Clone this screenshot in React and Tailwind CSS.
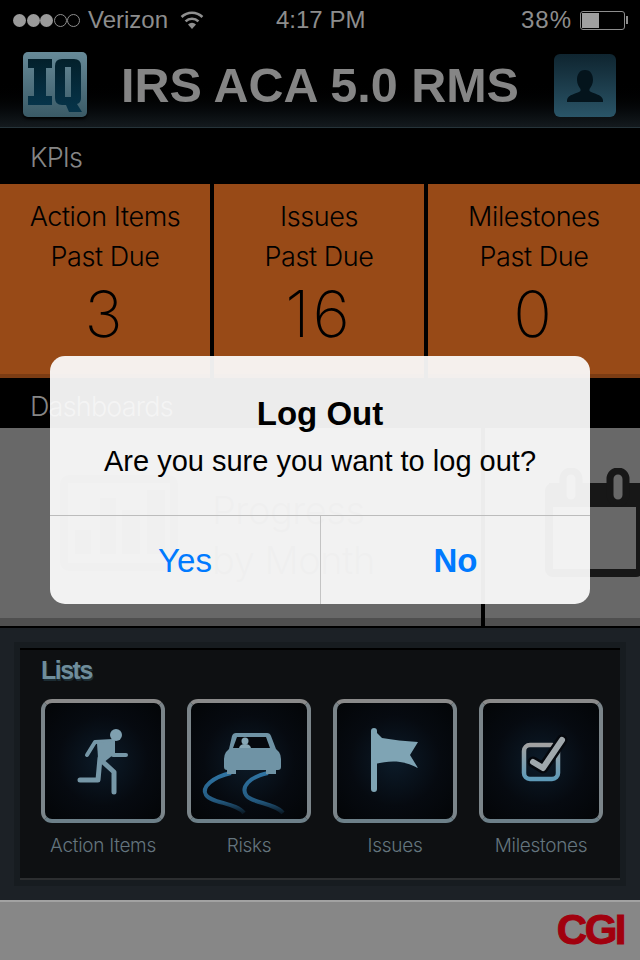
import React from "react";

const F = "font-['Liberation_Sans',Arial,sans-serif]";
const T = "font-['Inter','Liberation_Sans',Arial,sans-serif] font-light";

function Wifi() {
  return (
    <svg width="24" height="18" viewBox="0 0 24 18" className="ml-[12px]">
      <path d="M12 18 L8 13.4 A6 6 0 0 1 16 13.4 Z" fill="#8f8f8f" />
      <path d="M5.6 10.4 A9 9 0 0 1 18.4 10.4" fill="none" stroke="#8f8f8f" strokeWidth="2.6" />
      <path d="M1.6 6 A15 15 0 0 1 22.4 6" fill="none" stroke="#8f8f8f" strokeWidth="2.6" />
    </svg>
  );
}

function StatusBar() {
  return (
    <div className={`h-10 flex items-center pl-[13px] pr-[12px] text-[#8d8d8d] text-[24px] ${F}`}>
      <div className="flex w-[263px] items-center">
        <div className="flex gap-[0.5px] mr-[8px]">
          {[0, 1, 2].map((i) => (
            <span key={i} className="w-[13px] h-[13px] rounded-full bg-[#9a9a9a]" />
          ))}
          {[0, 1].map((i) => (
            <span key={i} className="w-[13px] h-[13px] rounded-full border border-[#8d8d8d]" />
          ))}
        </div>
        <span className="leading-none">Verizon</span>
        <Wifi />
      </div>
      <span className="text-[24px] leading-none font-medium">4:17 PM</span>
      <div className="flex flex-1 items-center justify-end">
        <span className="tracking-[1px] leading-none mr-[8px]">38%</span>
        <div className="w-[45px] h-[19px] border border-[#8d8d8d] rounded-[3px] p-[1px]">
          <div className="w-[17px] h-full bg-[#a0a0a0]" />
        </div>
        <span className="w-[2px] h-[8px] ml-[1px] bg-[#8d8d8d]" />
      </div>
    </div>
  );
}

function Header() {
  return (
    <div className="h-[88px] flex items-start pl-[23px] pr-[24px] bg-gradient-to-b from-[#000000] from-45% to-[#141a1e] border-b border-[#26343a]">
      <div className="mt-[12px] w-[64px] h-[65px] rounded-[5px] bg-gradient-to-b from-[#678a98] to-[#3a5a66] shadow-[0_2px_3px_#000] flex items-center justify-center">
        <svg width="56" height="58" viewBox="0 0 56 58">
          <defs>
            <linearGradient id="iq" x1="0" y1="0" x2="0" y2="1">
              <stop offset="0" stopColor="#03202b" />
              <stop offset="1" stopColor="#06344a" />
            </linearGradient>
          </defs>
          <path d="M1 3 H25 V12 H19 V40 H25 V49 H1 V40 H7 V12 H1 Z" fill="url(#iq)" />
          <path fillRule="evenodd" d="M28 10 Q28 3 35 3 H47 Q54 3 54 10 V42 Q54 47 50 48 L55 56 H42 L39 49 H35 Q28 49 28 42 Z M38 11 V41 H44 V11 Z" fill="url(#iq)" />
        </svg>
      </div>
      <div className={`ml-[34px] mt-[18px] text-[48.5px] leading-[54px] font-bold text-[#858585] whitespace-nowrap ${F}`}>
        IRS ACA 5.0 RMS
      </div>
      <div className="ml-auto mt-[14px] w-[62px] h-[63px] rounded-[6px] bg-gradient-to-b from-[#0f2530] to-[#2a5568] flex items-center justify-center">
        <svg width="36" height="32" viewBox="0 0 36 32">
          <path d="M18 0 C12 0 10 5 10 10 C10 14 12 17 13.5 19 V21 C10 24 1 24 0 30 V32 H36 V30 C35 24 26 24 22.5 21 V19 C24 17 26 14 26 10 C26 5 24 0 18 0 Z" fill="#04141c" />
        </svg>
      </div>
    </div>
  );
}

function SectionLabel({ children, h, pt }) {
  return (
    <div className={`${h} ${pt} pl-[30px] flex items-center text-[27px] text-[#868686] bg-black ${T}`}>
      <span className="leading-none tracking-[-0.8px]">{children}</span>
    </div>
  );
}

function Kpi({ a, b, n, w }) {
  return (
    <div className={`${w} h-[194px] bg-[#984a17] border-b-4 border-[#7c3c13] flex flex-col items-center text-black ${T}`}>
      <span className="mt-[16px] text-[27px] tracking-[-0.4px] leading-[34px]">{a}</span>
      <span className="mt-[6px] text-[27px] tracking-[-0.4px] leading-[34px]">{b}</span>
      <span className="mt-[6px] text-[64px] leading-[68px] tracking-[3px] font-extralight">{n}</span>
    </div>
  );
}

function Dashboards() {
  return (
    <div className="h-[198px] flex bg-[#686868] overflow-hidden">
      <div className="w-[481px] shrink-0 h-full border-b-8 border-[#4f4f4f] flex pl-[60px] pt-[47px]">
        <svg width="118" height="96" viewBox="0 0 118 96" className="shrink-0">
          <rect x="4" y="4" width="110" height="88" rx="5" fill="none" stroke="#4a4a4a" strokeWidth="8" />
          <rect x="15" y="55" width="16" height="24" fill="#4a4a4a" />
          <rect x="40" y="23" width="16" height="56" fill="#4a4a4a" />
          <rect x="62" y="35" width="18" height="44" fill="#4a4a4a" />
          <rect x="87" y="15" width="18" height="64" fill="#4a4a4a" />
        </svg>
        <div className={`ml-[34px] mt-[10px] text-[38px] tracking-[-0.5px] leading-[50px] text-[#3a3a3a] whitespace-nowrap ${T}`}>
          Progress
          <br />
          by Month
        </div>
      </div>
      <div className="w-[4px] shrink-0 h-full bg-black" />
      <div className="w-[155px] shrink-0 h-full border-b-8 border-[#4f4f4f] pl-[60px] pt-[40px]">
        <svg width="100" height="110" viewBox="0 0 100 110">
          <rect x="4" y="19" width="91" height="86" rx="4" fill="none" stroke="#171717" strokeWidth="8" />
          <rect x="4" y="15" width="91" height="24" fill="#171717" />
          <rect x="18" y="3" width="16" height="32" rx="8" fill="#686868" stroke="#171717" strokeWidth="7" />
          <rect x="65" y="3" width="16" height="32" rx="8" fill="#686868" stroke="#171717" strokeWidth="7" />
        </svg>
      </div>
    </div>
  );
}

const Fx = { strokeLinecap: "round", strokeLinejoin: "round", fill: "none" };

const icons = {
  run: (
    <svg width="116" height="116" viewBox="0 0 116 116">
      <g stroke="#7697a7" {...Fx} strokeWidth="4">
        <path d="M42 52 L50 39 L68 38 L68 52 L81 52" />
        <path d="M35 77 H53 L55 55" strokeWidth="5" />
        <path d="M58 59 L69 69 V89" strokeWidth="5" />
      </g>
      <circle cx="71" cy="32" r="6" fill="#7fa0b0" />
      <path d="M52 40 L68 38 V52 L58 60 L53 55 Z" fill="#7697a7" />
    </svg>
  ),
  car: (
    <svg width="116" height="116" viewBox="0 0 116 116">
      <defs>
        <linearGradient id="tr" x1="0" y1="0" x2="0" y2="1">
          <stop offset="0" stopColor="#2f74a3" />
          <stop offset="0.7" stopColor="#23597f" />
          <stop offset="1" stopColor="#0b1a26" />
        </linearGradient>
      </defs>
      <path d="M40 70 C22 74 10 84 15 92 C20 100 46 100 53 110" fill="none" stroke="url(#tr)" strokeWidth="4" />
      <path d="M77 70 C58 74 50 84 55 92 C60 100 84 100 92 110" fill="none" stroke="url(#tr)" strokeWidth="4" />
      <path d="M45 30 H76 Q79 30 80 33 L85 46 L88 49 Q90 52 90 56 V64 Q90 67 87 67 H85 V71 H75 V67 H45 V71 H36 V67 H36 Q33 67 33 64 V56 Q33 52 35 49 L38 46 L41 33 Q42 30 45 30 Z" fill="#6f93a5" />
      <path d="M46 34 H75 L79 45 H42 Z" fill="#05080d" />
      <circle cx="54" cy="38" r="3.5" fill="#88a8b6" />
      <path d="M48 45 Q49 41 54 41 Q59 41 60 45 Z" fill="#88a8b6" />
    </svg>
  ),
  flag: (
    <svg width="116" height="116" viewBox="0 0 116 116">
      <rect x="34" y="25" width="6" height="64" rx="3" fill="#7fa4b4" />
      <path d="M37 27 L45 35 C56 37 68 38 81 39 L73 52 L81 65 C75 62 70 60 63 59 C54 58 47 59 38 61 Z" fill="#7fa4b4" />
    </svg>
  ),
  check: (
    <svg width="116" height="116" viewBox="0 0 116 116">
      <defs>
        <linearGradient id="cb" x1="0" y1="0" x2="0" y2="1">
          <stop offset="0" stopColor="#a2a2a2" />
          <stop offset="1" stopColor="#5e9ab8" />
        </linearGradient>
      </defs>
      <rect x="41" y="42" width="34" height="34" rx="6" fill="none" stroke="url(#cb)" strokeWidth="4.5" />
      <path d="M50 59 L60 65 L79 37" fill="none" stroke="#05080d" strokeWidth="11" strokeLinecap="round" strokeLinejoin="round" />
      <path d="M50 59 L60 65 L79 37" fill="none" stroke="#a0a8ac" strokeWidth="6" strokeLinecap="round" strokeLinejoin="round" />
    </svg>
  ),
};

function ListItem({ icon, label }) {
  return (
    <div className="w-[124px] flex flex-col items-center">
      <div className="w-[124px] h-[124px] rounded-[11px] border-[4px] border-x-[#7b858a] border-t-[#8a8a8a] border-b-[#6d8089] flex items-center justify-center bg-[radial-gradient(circle,#0c1b29_0%,#060a10_55%,#030507_100%)]">
        {icons[icon]}
      </div>
      <span className={`mt-[10px] text-[19px] tracking-[-0.3px] leading-[26px] text-[#64757e] whitespace-nowrap ${T}`}>{label}</span>
    </div>
  );
}

function Lists() {
  return (
    <div className="h-[274px] bg-[#1c2126] border-t-2 border-black pt-[14px] px-[14px]">
      <div className="h-[244px] bg-[#171c20] p-[6px]">
        <div className="h-[232px] bg-[#0e1012] border-t-2 border-t-black border-b-2 border-b-[#2c2e30] pl-[21px]">
          <div className={`mt-[5px] h-[32px] text-[25px] leading-[30px] font-bold tracking-[-1.5px] text-[#6f8d9b] [text-shadow:1px_2px_0_#1c2c33] ${F}`}>Lists</div>
          <div className="mt-[12px] flex gap-[22px]">
            <ListItem icon="run" label="Action Items" />
            <ListItem icon="car" label="Risks" />
            <ListItem icon="flag" label="Issues" />
            <ListItem icon="check" label="Milestones" />
          </div>
        </div>
      </div>
    </div>
  );
}

function Footer() {
  return (
    <div className="h-[60px] bg-[#878787] border-t-2 border-[#a2a2a2] flex justify-end pr-[16px] pt-[11px]">
      <span className={`text-[42px] leading-[34px] font-bold tracking-[-2.5px] text-[#a1000e] [-webkit-text-stroke:1px_#a1000e] ${F}`}>CGI</span>
    </div>
  );
}

function Dialog() {
  return (
    <div className={`absolute left-[50px] top-[356px] w-[540px] h-[248px] rounded-[15px] bg-[#fbfbfb]/94 flex flex-col ${F}`}>
      <div className="h-[160px] border-b border-[#bcbcbc] flex flex-col items-center">
        <span className="mt-[39px] text-[33px] leading-[38px] font-bold text-black">Log Out</span>
        <span className="mt-[11px] text-[29px] leading-[34px] text-black">Are you sure you want to log out?</span>
      </div>
      <div className="flex-1 flex text-[33px] text-[#007aff]">
        <div className="w-[271px] border-r border-[#c4c4c4] flex items-center justify-center pt-[2px]">Yes</div>
        <div className="flex-1 flex items-center justify-center font-bold pt-[2px]">No</div>
      </div>
    </div>
  );
}

export default function App() {
  return (
    <div className="relative w-[640px] h-[960px] bg-black overflow-hidden">
      <StatusBar />
      <Header />
      <SectionLabel h="h-[56px]" pt="pt-[2px]">KPIs</SectionLabel>
      <div className="flex gap-[4px]">
        <Kpi w="w-[210px]" a="Action Items" b="Past Due" n="3" />
        <Kpi w="w-[210px]" a="Issues" b="Past Due" n="16" />
        <Kpi w="flex-1" a="Milestones" b="Past Due" n="0" />
      </div>
      <SectionLabel h="h-[50px]" pt="pt-[6px]">Dashboards</SectionLabel>
      <Dashboards />
      <Lists />
      <Footer />
      <Dialog />
    </div>
  );
}
